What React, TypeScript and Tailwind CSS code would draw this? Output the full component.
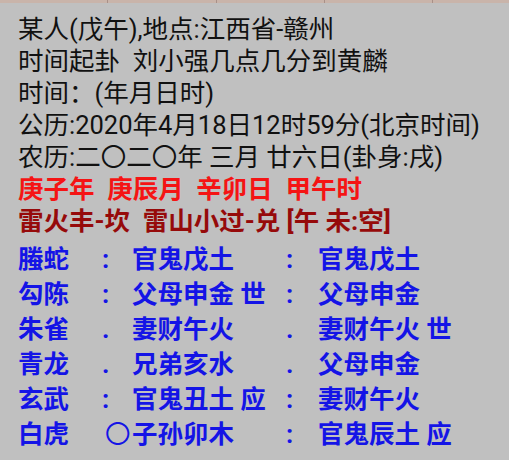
import React from 'react';

const font = { fontFamily: 'Roboto, "Noto Sans CJK SC", sans-serif' };

const rows = [
  { name: '螣蛇', m1: ':', t1: '官鬼戊土', m2: ':', t2: '官鬼戊土' },
  { name: '勾陈', m1: ':', t1: '父母申金 世', m2: ':', t2: '父母申金' },
  { name: '朱雀', m1: '.', t1: '妻财午火', m2: '.', t2: '妻财午火 世' },
  { name: '青龙', m1: '.', t1: '兄弟亥水', m2: '.', t2: '父母申金' },
  { name: '玄武', m1: ':', t1: '官鬼丑土 应', m2: ':', t2: '妻财午火' },
  { name: '白虎', m1: '〇', t1: '子孙卯木', m2: ':', t2: '官鬼辰土 应' },
];

const App = () => {
  return (
    <div className="w-[509px] h-[460px] bg-[#c0c0c0] overflow-hidden" style={font}>
      {/* top strip */}
      <div className="flex h-[3px] bg-[#c9b4aa]">
        <div className="w-[108px] border-r border-[#a89088]" />
        <div className="w-[109px] border-r border-[#a89088]" />
        <div className="w-[108px] border-r border-[#a89088]" />
        <div className="w-[108px] border-r border-[#a89088]" />
        <div className="flex-1" />
      </div>

      <div className="pl-[18px] pt-[10px] text-[25.5px] leading-[32px] whitespace-pre">
        <div className="text-[#111]">某人(戊午),地点:江西省-赣州</div>
        <div className="text-[#111]">时间起卦  刘小强几点几分到黄麟</div>
        <div className="text-[#111]">时间：(年月日时)</div>
        <div className="text-[#111]">公历:2020年4月18日12时59分(北京时间)</div>
        <div className="text-[#111]">农历:二〇二〇年 三月 廿六日(卦身:戌)</div>
        <div className="font-bold text-[#f51414]">庚子年  庚辰月  辛卯日  甲午时</div>
        <div className="font-bold text-[#960a0a]">雷火丰-坎  雷山小过-兑 [午 未:空]</div>
      </div>

      <div className="pl-[18px] pt-[5px] text-[25.5px] leading-[35px] font-bold text-[#1414e6] whitespace-pre">
        {rows.map((r, i) => (
          <div key={i} className="grid grid-cols-[82px_32px_150px_36px_1fr]">
            <span>{r.name}</span>
            <span className={r.m1 === '〇' ? 'pl-[5px] font-normal' : 'pl-[2px]'}>{r.m1}</span>
            <span>{r.t1}</span>
            <span className="pl-[4px]">{r.m2}</span>
            <span>{r.t2}</span>
          </div>
        ))}
      </div>
    </div>
  );
};

export default App;
